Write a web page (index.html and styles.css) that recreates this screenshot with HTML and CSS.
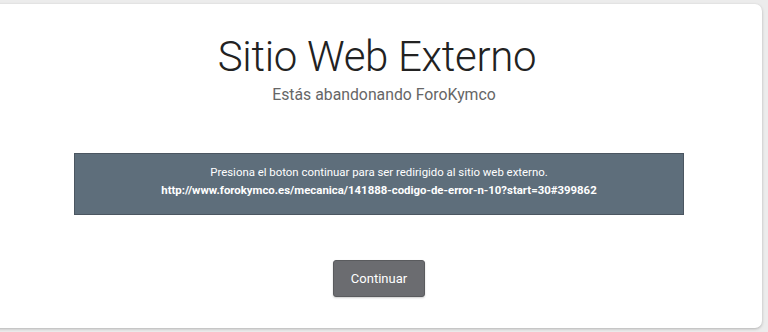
FILE: index.html
```html
<!DOCTYPE html>
<html lang="es">
  <head>
    <meta charset="UTF-8" />
    <meta name="viewport" content="width=device-width, initial-scale=1.0" />
    <title>Sitio Web Externo</title>
    <link rel="stylesheet" href="styles.css">
  </head>
  <body>
    <div class="card">
      <h1>Sitio Web Externo</h1>
      <p class="subtitle">Estás abandonando ForoKymco</p>
      <div class="notice">
        <p>Presiona el boton continuar para ser redirigido al sitio web externo.</p>
        <p class="link">http://www.forokymco.es/mecanica/141888-codigo-de-error-n-10?start=30#399862</p>
      </div>
      <div class="button-panel">
        <a href="#" class="button">Continuar</a>
      </div>
    </div>
  </body>
</html>
```

FILE: styles.css
```css
* {
  margin: 0;
  padding: 0;
  box-sizing: border-box;
}

body {
  font-family: Roboto, "Liberation Sans", sans-serif;
  background: #ececec;
  height: 100vh;
  padding: 4px 6px 4px 0;
  overflow: hidden;
}

.card {
  background: #ffffff;
  margin-left: -8px;
  height: 324px;
  border-radius: 7px;
  box-shadow: 0 1px 3px rgba(0, 0, 0, 0.25);
  padding-top: 28px;
  text-align: center;
}

h1 {
  font-weight: 300;
  font-size: 42px;
  line-height: 50px;
  color: #222222;
  letter-spacing: -0.3px;
}

.subtitle {
  margin-top: 3px;
  font-size: 15.8px;
  line-height: 20px;
  color: #666666;
  padding-left: 14px;
}

.notice {
  margin: 48px 78px 0 82px;
  background: #5e6e7b;
  border: 1px solid #4b5661;
  color: #ffffff;
  font-size: 11.4px;
  line-height: 18px;
  padding: 9px 0 15px;
}

.notice .link {
  font-weight: 700;
}

.button-panel {
  margin-top: 45px;
  padding-left: 4px;
}

.button {
  display: inline-block;
  width: 92px;
  height: 37px;
  line-height: 35px;
  background: #6b6c70;
  border: 1px solid #5a5b5e;
  border-radius: 3px;
  color: #ffffff;
  font-size: 13px;
  text-decoration: none;
  box-shadow: 0 1px 2px rgba(0, 0, 0, 0.2);
}
```
